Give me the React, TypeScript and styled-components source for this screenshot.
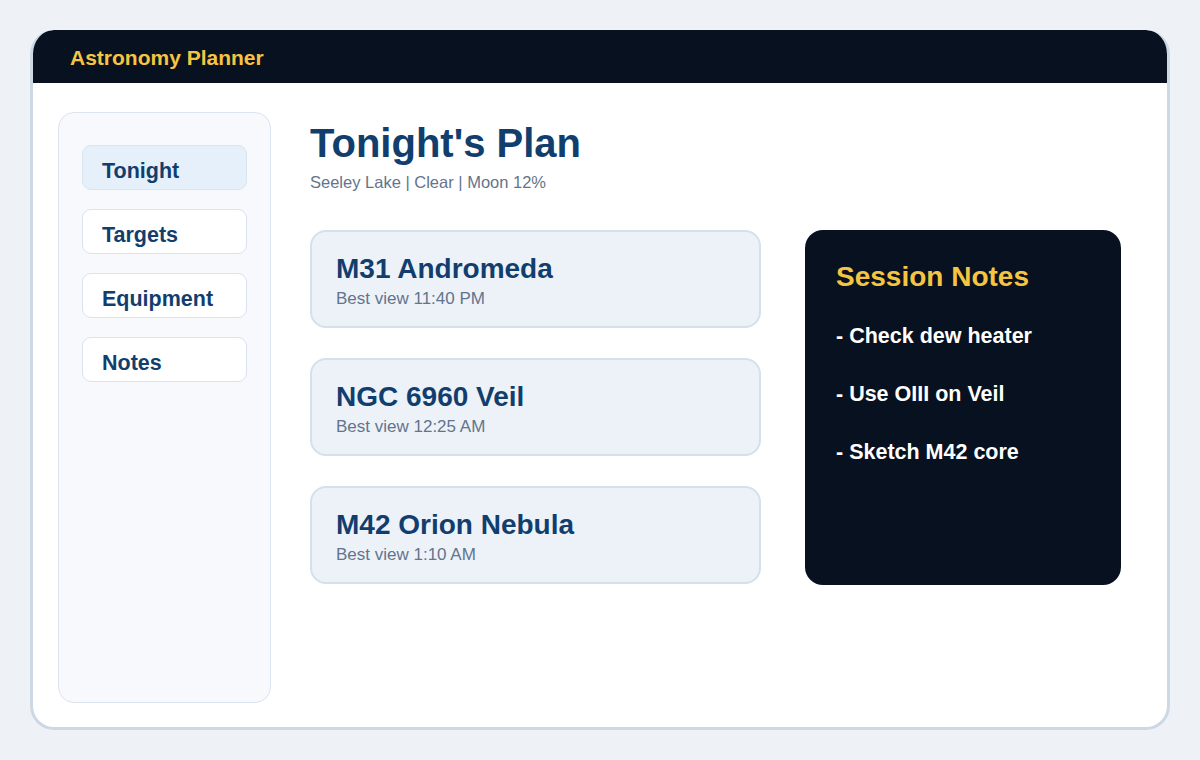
import styled, { createGlobalStyle } from 'styled-components'

const GlobalStyle = createGlobalStyle`
  body {
    margin: 0;
    background: #eef2f7;
    font-family: "Liberation Sans", Arial, sans-serif;
  }
`

const Page = styled.div`
  padding: 30px;
  height: 760px;
  box-sizing: border-box;
`

const Frame = styled.div`
  width: 1140px;
  height: 700px;
  box-sizing: border-box;
  background: #ffffff;
  border: 3px solid #cdd8e5;
  border-top: none;
  border-radius: 24px;
  overflow: hidden;
  display: flex;
  flex-direction: column;
`

const Header = styled.header`
  height: 53px;
  margin: 0 -3px;
  flex-shrink: 0;
  box-sizing: border-box;
  background: #08111f;
  display: flex;
  align-items: center;
  padding: 3px 0 0 40px;
  border-radius: 24px 24px 0 0;
`

const Brand = styled.div`
  color: #f5c542;
  font-size: 21px;
  font-weight: 700;
`

const Body = styled.div`
  flex: 1;
  display: flex;
  padding: 29px 46px 24px 25px;
  gap: 39px;
  min-height: 0;
`

const Sidebar = styled.nav`
  width: 213px;
  box-sizing: border-box;
  background: #f7f9fc;
  border: 1px solid #dbe3ee;
  border-radius: 16px;
  padding: 32px 23px;
  display: flex;
  flex-direction: column;
  gap: 19px;
`

const NavItem = styled.div<{ $active?: boolean }>`
  height: 45px;
  box-sizing: border-box;
  border: 1px solid #dbe3ee;
  border-radius: 9px;
  background: ${({ $active }) => ($active ? '#e6f0fb' : '#ffffff')};
  display: flex;
  align-items: center;
  padding: 8px 0 0 19px;
  color: #123e6e;
  font-size: 21.5px;
  font-weight: 700;
`

const Main = styled.main`
  flex: 1;
  display: flex;
  flex-direction: column;
`

const Title = styled.h1`
  margin: 8px 0 0;
  color: #123e6e;
  font-size: 40px;
  font-weight: 700;
  line-height: 46px;
`

const Subtitle = styled.div`
  margin-top: 7px;
  color: #64748b;
  font-size: 16.5px;
  line-height: 19px;
`

const Columns = styled.div`
  margin-top: 38px;
  display: grid;
  grid-template-columns: 451px 316px;
  gap: 44px;
  align-items: start;
`

const CardList = styled.div`
  display: flex;
  flex-direction: column;
  gap: 30px;
`

const Card = styled.div`
  height: 98px;
  box-sizing: border-box;
  background: #edf2f9;
  border: 2px solid #d5e0ec;
  border-radius: 16px;
  padding: 21px 24px 0;
`

const CardTitle = styled.div`
  color: #123e6e;
  font-size: 28px;
  font-weight: 700;
  line-height: 32px;
`

const CardMeta = styled.div`
  margin-top: 4px;
  color: #64748b;
  font-size: 17px;
  line-height: 20px;
`

const NotesPanel = styled.aside`
  height: 355px;
  box-sizing: border-box;
  background: #08111f;
  border-radius: 18px;
  padding: 31px 31px 0;
`

const NotesTitle = styled.div`
  color: #f5c542;
  font-size: 28px;
  font-weight: 700;
  line-height: 32px;
`

const NotesList = styled.div`
  margin-top: 31px;
  display: flex;
  flex-direction: column;
  gap: 33px;
`

const NoteItem = styled.div`
  color: #ffffff;
  font-size: 21.5px;
  font-weight: 700;
  line-height: 25px;
`

const navItems = ['Tonight', 'Targets', 'Equipment', 'Notes']

const targets = [
  { name: 'M31 Andromeda', time: 'Best view 11:40 PM' },
  { name: 'NGC 6960 Veil', time: 'Best view 12:25 AM' },
  { name: 'M42 Orion Nebula', time: 'Best view 1:10 AM' },
]

const notes = ['- Check dew heater', '- Use OIII on Veil', '- Sketch M42 core']

export default function App() {
  return (
    <>
      <GlobalStyle />
      <Page>
        <Frame>
          <Header>
            <Brand>Astronomy Planner</Brand>
          </Header>
          <Body>
            <Sidebar>
              {navItems.map((item, index) => (
                <NavItem $active={index === 0} key={item}>
                  {item}
                </NavItem>
              ))}
            </Sidebar>
            <Main>
              <Title>Tonight's Plan</Title>
              <Subtitle>Seeley Lake | Clear | Moon 12%</Subtitle>
              <Columns>
                <CardList>
                  {targets.map(({ name, time }) => (
                    <Card key={name}>
                      <CardTitle>{name}</CardTitle>
                      <CardMeta>{time}</CardMeta>
                    </Card>
                  ))}
                </CardList>
                <NotesPanel>
                  <NotesTitle>Session Notes</NotesTitle>
                  <NotesList>
                    {notes.map((note) => (
                      <NoteItem key={note}>{note}</NoteItem>
                    ))}
                  </NotesList>
                </NotesPanel>
              </Columns>
            </Main>
          </Body>
        </Frame>
      </Page>
    </>
  )
}
